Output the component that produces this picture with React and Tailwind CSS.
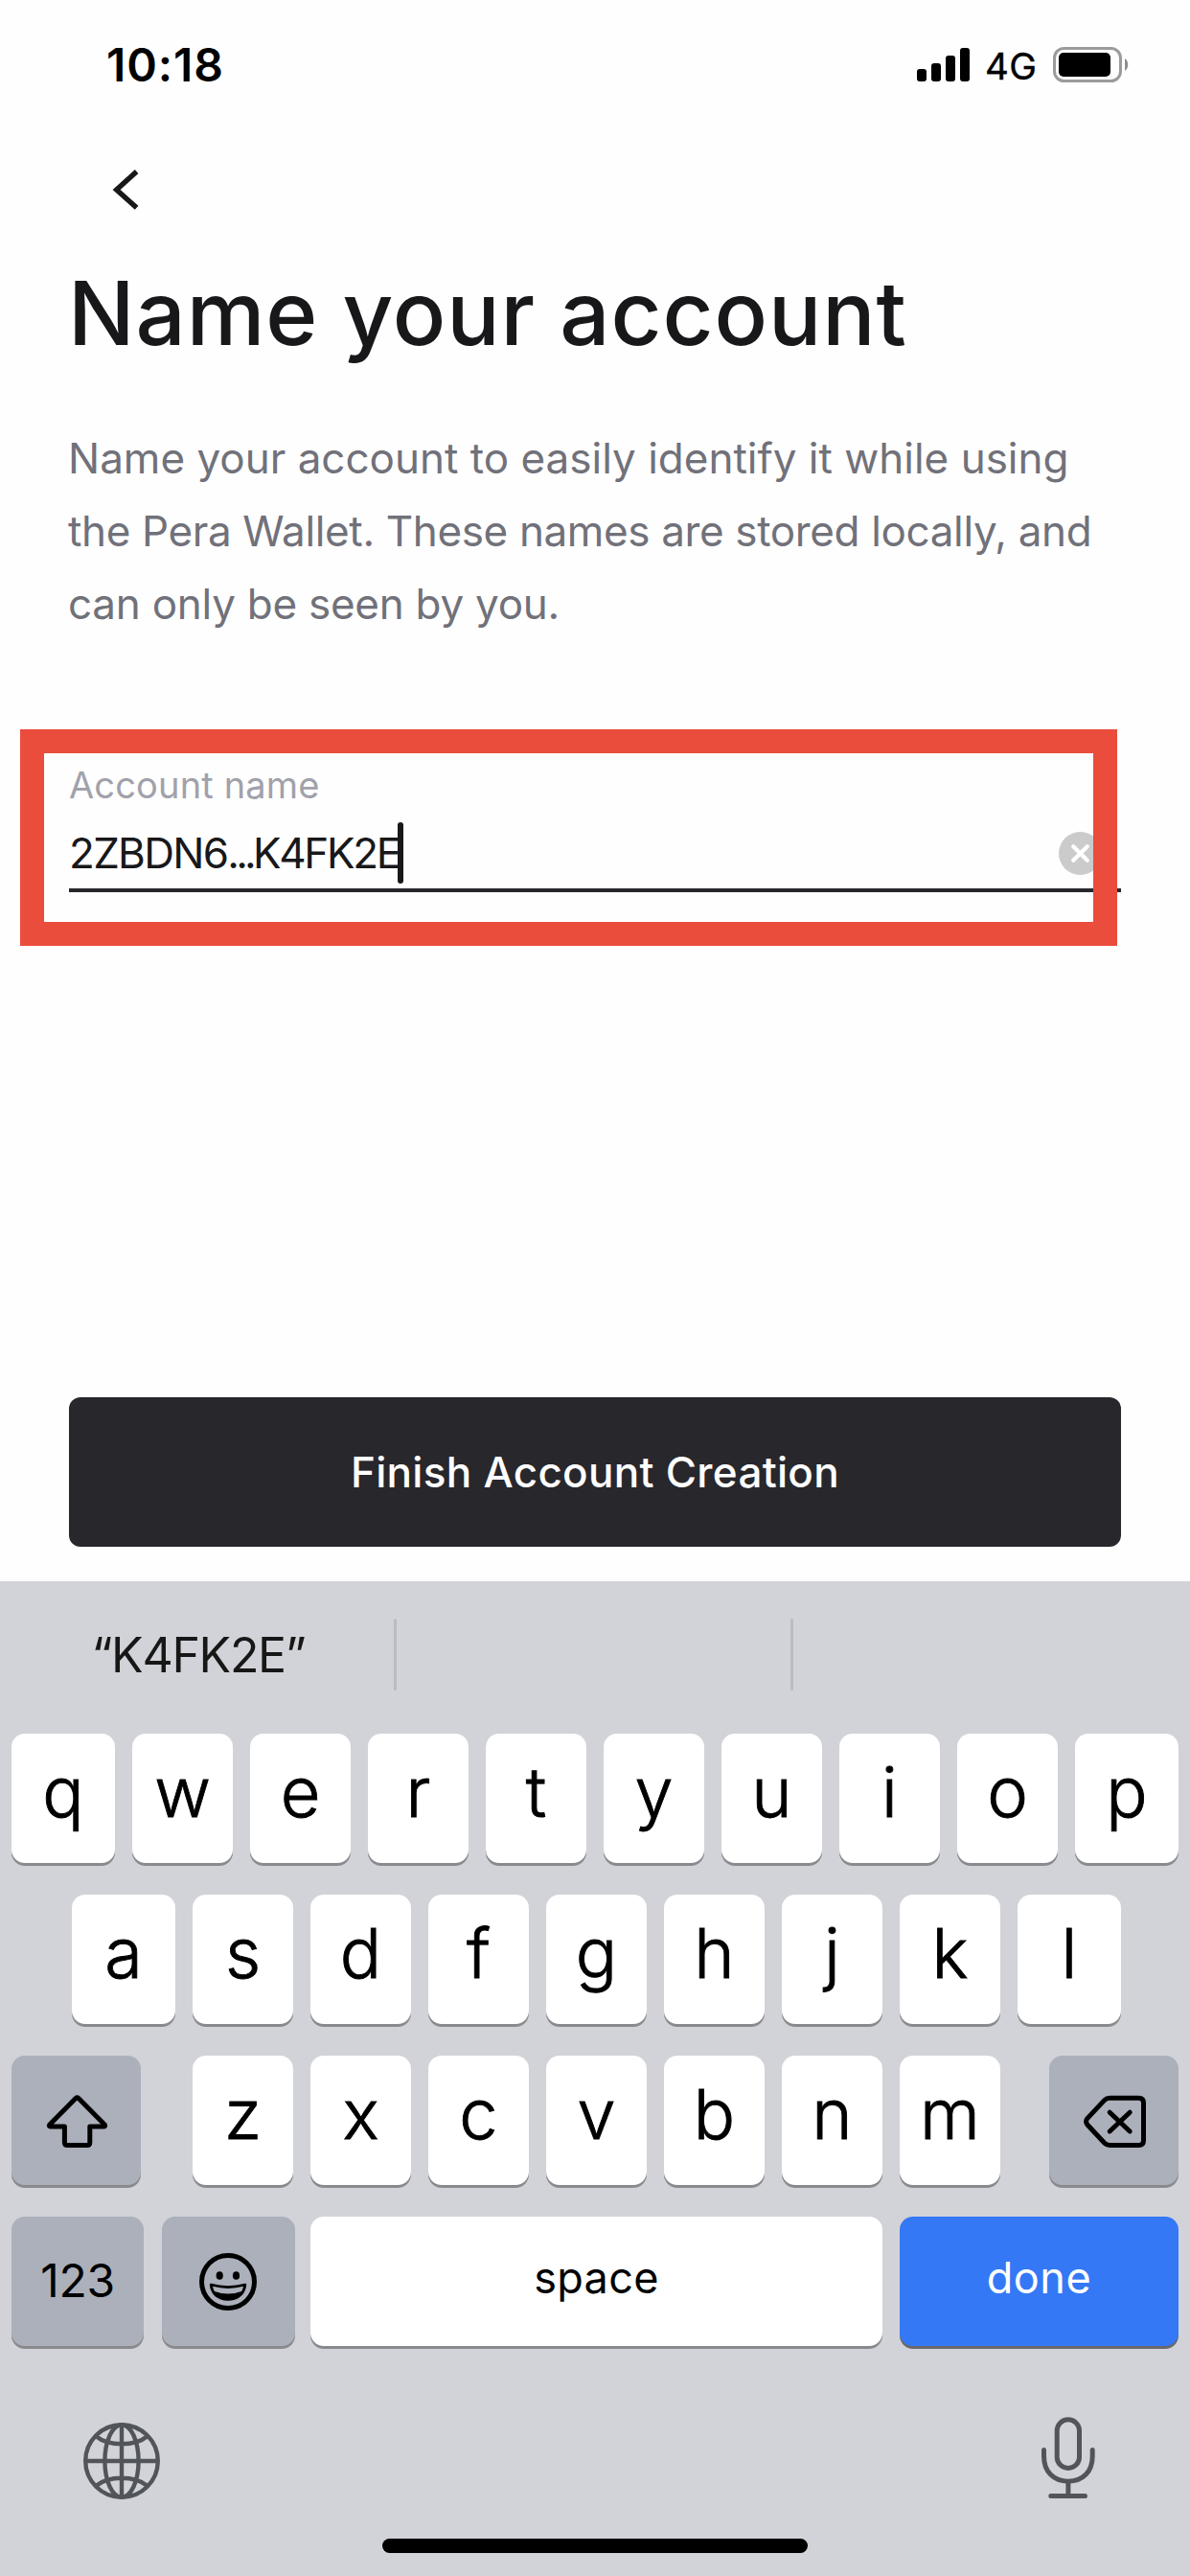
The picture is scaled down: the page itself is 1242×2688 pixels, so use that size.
import React from "react";

function StatusBar() {
  return (
    <div className="flex h-[137px] shrink-0 items-start justify-between pl-[111px] pr-[64px] text-black">
      <span className="mt-[44px] text-[48px] font-semibold leading-none tracking-[0.9px]">10:18</span>
      <div className="flex items-start">
        <svg className="mt-[50px] h-[35px] w-[55px]" viewBox="0 0 55 35" fill="#000">
          <rect x="0" y="22" width="10" height="13" rx="3" />
          <rect x="15" y="16" width="10" height="19" rx="3" />
          <rect x="30" y="8" width="10" height="27" rx="3" />
          <rect x="45" y="0" width="10" height="35" rx="3" />
        </svg>
        <span className="ml-[16px] mt-[50px] w-[71px] text-[38.5px] font-normal leading-none tracking-[0.3px] [-webkit-text-stroke:0.4px_black]">4G</span>
        <svg className="mt-[49px] h-[37px] w-[79px]" viewBox="0 0 79 37">
          <rect x="1.5" y="1.5" width="69" height="34" rx="10" fill="none" stroke="#9b9b9b" strokeWidth="3" />
          <rect x="6" y="6" width="54" height="25" rx="5" fill="#000" />
          <path d="M75 12 C79.3 14.5 79.3 22.5 75 25 Z" fill="#8e8e8e" />
        </svg>
      </div>
    </div>
  );
}

function ShiftIcon() {
  return (
    <svg className="ml-[36px] mt-[40px] h-[58px] w-[66px]" viewBox="0 0 66 58" fill="none" stroke="#000" strokeWidth="5" strokeLinejoin="round">
      <path d="M31 4.6 Q32.5 3.2 34 4.6 L61.2 32 Q62.3 34 60.5 34 H45.8 V50.5 Q45.8 53.5 42.8 53.5 H22.4 Q19.4 53.5 19.4 50.5 V34 H4.7 Q2.7 34 3.8 32 Z" />
    </svg>
  );
}

function BackspaceIcon() {
  return (
    <svg className="ml-[35px] mt-[40px] h-[58px] w-[68px]" viewBox="0 0 68 58" fill="none" stroke="#000" strokeWidth="5" strokeLinecap="round" strokeLinejoin="round">
      <path d="M28 4.2 H58.5 Q63.5 4.2 63.5 9.2 V48.5 Q63.5 53.5 58.5 53.5 H28 Q25 53.5 22.8 51.3 L4.8 32 Q2.4 28.8 4.8 25.6 L22.8 6.4 Q25 4.2 28 4.2 Z" />
      <path d="M28.2 19.2 L49.2 39 M49.2 19.2 L28.2 39" />
    </svg>
  );
}

function EmojiIcon() {
  return (
    <svg className="ml-[39px] mt-[38px] h-[60px] w-[60px]" viewBox="0 0 60 60">
      <circle cx="30" cy="30" r="27.5" fill="none" stroke="#000" strokeWidth="5" />
      <ellipse cx="21.2" cy="23.5" rx="3.6" ry="4.3" />
      <ellipse cx="38.5" cy="23.5" rx="3.6" ry="4.3" />
      <path d="M10.8 33 Q10.8 31.4 12.5 31.8 Q30 36.6 47.5 31.8 Q49.2 31.4 49.2 33 C48.5 43 41 49.8 30 49.8 C19 49.8 11.5 43 10.8 33 Z" />
      <path d="M14 34.8 Q30 39 46 34.8 Q45.5 37.8 44 40 Q30 45 16 40 Q14.5 37.8 14 34.8 Z" fill="#acb0bb" />
    </svg>
  );
}

function GlobeIcon() {
  return (
    <svg className="mt-[6px] h-[80px] w-[80px]" viewBox="0 0 80 80" fill="none" stroke="#51555b" strokeWidth="4.4">
      <circle cx="40" cy="40" r="37.8" />
      <ellipse cx="40" cy="40" rx="17.6" ry="37.8" />
      <path d="M40 2 V78 M2 40 H78 M13 14 Q23 22.3 40 22.3 Q57 22.3 67 14 M13 66 Q23 57.7 40 57.7 Q57 57.7 67 66" />
    </svg>
  );
}

function MicIcon() {
  return (
    <svg className="h-[86px] w-[58px]" viewBox="0 0 58 86" fill="none" stroke="#51555b" strokeWidth="5" strokeLinecap="round">
      <rect x="17.2" y="2.8" width="23.3" height="50.7" rx="11.6" />
      <path d="M3.5 34.5 V41 C3.5 57 13.5 67.2 28.9 67.2 C44.3 67.2 54.2 57 54.2 41 V34.5 M28.9 67.5 V82 M10.8 82.5 H46.5" />
    </svg>
  );
}

function Letter({ char, wide }) {
  return (
    <div
      className={`flex h-[135px] items-center justify-center rounded-[14px] bg-white pb-[13px] text-[72px] font-light leading-none text-black shadow-[0_3px_0_#898a8e] [-webkit-text-stroke:0.9px_black] ${wide ? "w-[108px]" : "w-[105px]"}`}
    >
      {char}
    </div>
  );
}

function Keyboard() {
  return (
    <div className="mt-auto flex h-[1038px] shrink-0 flex-col bg-[#d2d3d8]">
      <div className="flex h-[153px] items-center">
        <div className="flex w-[411px] justify-center pl-[3px] text-[50px] leading-none tracking-[-1.3px] text-[#171717]">“K4FK2E”</div>
        <div className="h-[75px] w-[3px] rounded-full bg-[#bbbcc1]" />
        <div className="w-[411px]" />
        <div className="h-[75px] w-[3px] rounded-full bg-[#bbbcc1]" />
      </div>

      <div className="mt-[6px] flex flex-col gap-[33px] px-[12px]">
        <div className="flex justify-between">
          {"qwertyuiop".split("").map((c) => (
            <Letter key={c} char={c} wide={c === "q" || c === "p"} />
          ))}
        </div>
        <div className="flex justify-between pl-[63px] pr-[60px]">
          {"asdfghjkl".split("").map((c) => (
            <Letter key={c} char={c} wide={c === "a" || c === "l"} />
          ))}
        </div>
        <div className="flex">
          <div className="flex h-[135px] w-[135px] items-start rounded-[14px] bg-[#acb0bb] shadow-[0_3px_0_#898a8e]">
            <ShiftIcon />
          </div>
          <div className="ml-[54px] mr-[51px] flex gap-[18px]">
            {"zxcvbnm".split("").map((c) => (
              <Letter key={c} char={c} />
            ))}
          </div>
          <div className="flex h-[135px] w-[135px] items-start rounded-[14px] bg-[#acb0bb] shadow-[0_3px_0_#898a8e]">
            <BackspaceIcon />
          </div>
        </div>
        <div className="flex text-[45px] leading-none text-black">
          <div className="flex h-[135px] w-[138px] items-center justify-center rounded-[14px] bg-[#acb0bb] pb-[1px] text-[48px] tracking-[-0.3px] shadow-[0_3px_0_#898a8e]">
            123
          </div>
          <div className="ml-[19px] flex h-[135px] w-[139px] items-start rounded-[14px] bg-[#acb0bb] shadow-[0_3px_0_#898a8e]">
            <EmojiIcon />
          </div>
          <div className="ml-[16px] flex h-[135px] w-[597px] items-center justify-center rounded-[14px] bg-white pb-[8px] tracking-[0.3px] shadow-[0_3px_0_#898a8e]">
            space
          </div>
          <div className="ml-[18px] flex h-[135px] w-[291px] items-center justify-center rounded-[14px] bg-[#3478f6] pb-[8px] tracking-[0.5px] text-white shadow-[0_3px_0_#68696c]">
            done
          </div>
        </div>
      </div>

      <div className="mt-[74px] flex h-[87px] items-start justify-between pl-[87px] pr-[98px]">
        <GlobeIcon />
        <MicIcon />
      </div>
      <div className="mt-[40px] h-[15px] w-[444px] self-center rounded-full bg-black" />
    </div>
  );
}

export default function App() {
  return (
    <div className="flex h-[2688px] w-[1242px] flex-col overflow-hidden bg-[#fefefe] font-['Inter',sans-serif]">
      <StatusBar />
      <svg className="ml-[117px] mt-[40px] h-[42px] w-[28px] shrink-0" viewBox="0 0 28 42" fill="none" stroke="#18181b" strokeWidth="5.4">
        <path d="M25.6 2 L4.6 20.9 L25.6 39.8" />
      </svg>

      <main className="flex flex-col px-[72px]">
        <h1 className="-ml-[1px] mt-[58px] whitespace-nowrap text-[92px] font-medium leading-[100px] tracking-[0.9px] text-[#18181b]">
          Name your account
        </h1>
        <p className="-ml-px mt-[63px] whitespace-nowrap text-[44px] leading-[76px] text-[#71717a]">
          <span className="block">Name your account to easily identify it while using</span>
          <span className="block tracking-[-0.36px]">the Pera Wallet. These names are stored locally, and</span>
          <span className="block tracking-[-0.25px]">can only be seen by you.</span>
        </p>

        <div className="relative mt-[128px] flex flex-col">
          <label className="text-[38px] leading-[46px] tracking-[0.15px] text-[#a1a1ab]">Account name</label>
          <div className="mt-[16px] flex h-[64px] items-center">
            <div className="flex w-[343px] whitespace-nowrap text-[44px] leading-[64px] text-[#18181b]">
              <span className="tracking-[-1.7px]">2ZBDN6</span>
              <span className="tracking-[-3.8px]">...</span>
              <span className="tracking-[-2.3px]">K4FK2E</span>
            </div>
            <div className="z-10 h-[64px] w-[6px] rounded-full bg-[#18181b]" />
            <svg className="ml-auto mr-[20px] h-[45px] w-[45px]" viewBox="0 0 45 45">
              <circle cx="22.5" cy="22.5" r="22.5" fill="#cbcbcb" />
              <path d="M15.2 15.2 L29.8 29.8 M29.8 15.2 L15.2 29.8" stroke="#fff" strokeWidth="4.2" strokeLinecap="round" />
            </svg>
          </div>
          <div className="mt-[5px] h-[4px] bg-[#28272c]" />
          <div className="absolute -left-[51px] -top-[35px] h-[226px] w-[1145px] border-[25px] border-[#ea4d3c]" />
        </div>

        <button className="mt-[527px] flex h-[156px] items-center justify-center rounded-[12px] bg-[#28272c] text-[44px] font-medium leading-none tracking-[0.3px] text-white">
          Finish Account Creation
        </button>
      </main>

      <Keyboard />
    </div>
  );
}
